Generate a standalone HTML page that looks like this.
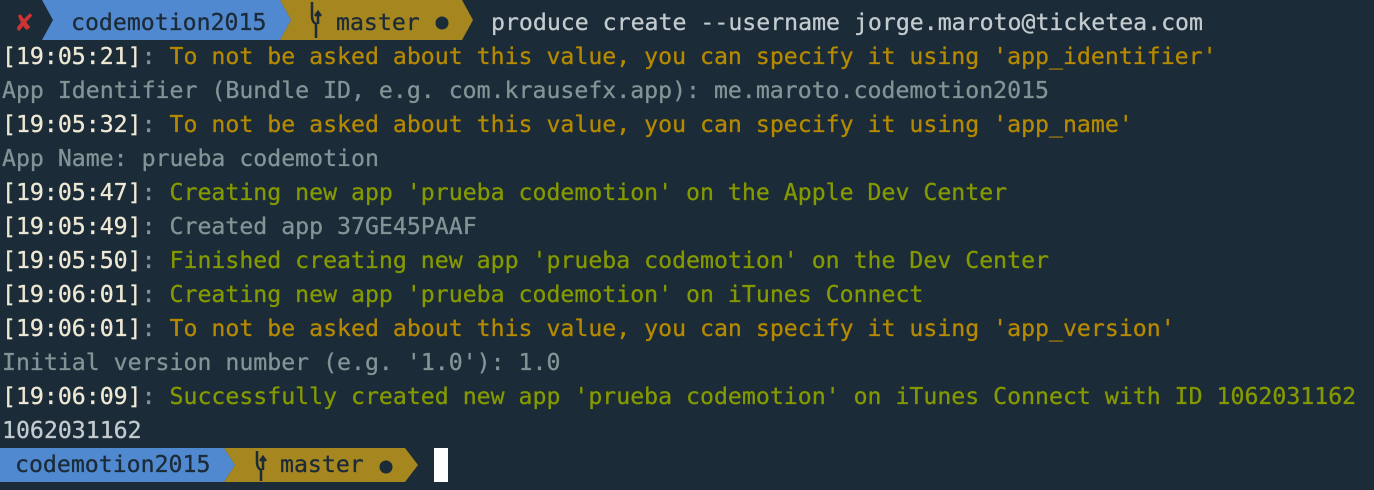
<!DOCTYPE html><html><head><style>
body{margin:0;width:1374px;height:490px;background:#1b2b37;overflow:hidden;position:relative;font-family:"DejaVu Sans Mono","Liberation Mono",monospace;font-size:23.2px;}
.l{position:absolute;left:2px;white-space:pre;height:34px;line-height:34px;color:#839496;-webkit-text-stroke:0.3px currentColor}
.t{color:#eee8d5}.y{color:#b58900}.g{color:#859900}
.a{position:absolute;white-space:pre;line-height:34px;color:#1b2b37;-webkit-text-stroke:0.3px currentColor}
</style></head><body>
<svg width="1374" height="490" style="position:absolute;left:0;top:0">
<polygon points="42,0 280,0 291,20 280,40 42,40 53,20" fill="#5189d0"/>
<polygon points="280,0 462,0 473,20 462,40 280,40 291,20" fill="#a5861f"/>
<polygon points="0,448 224,448 235,465 224,482 0,482" fill="#5189d0"/>
<polygon points="224,448 405,448 418,465 405,482 224,482 235,465" fill="#a5861f"/>
<rect x="434" y="448" width="14" height="34" fill="#fff"/>
<circle cx="442" cy="23" r="6.5" fill="#1b2b37"/>
<circle cx="386" cy="467" r="6.5" fill="#1b2b37"/>
<g stroke="#1b2b37" stroke-width="2.5" fill="none"><path d="M312,2V16M312,16Q312,22 316,24V38M318,24L318,14M315,16L318,12L321,16"/><path d="M257,451V462M257,462Q257,468 261,470V481M263,470L263,459M260,461L263,457L266,461"/></g>
<text x="14" y="31" fill="#cc3333" font-size="24" font-weight="bold" font-family="DejaVu Sans">✘</text>
</svg>
<div class="a" style="left:71px;top:6px">codemotion2015</div>
<div class="a" style="left:336px;top:6px">master</div>
<div class="a" style="left:491px;top:6px;color:#c3cbcf">produce create --username jorge.maroto@ticketea.com</div>
<div class="l" style="top:40px"><span class="t">[19:05:21]</span>: <span class="y">To not be asked about this value, you can specify it using 'app_identifier'</span></div>
<div class="l" style="top:74px">App Identifier (Bundle ID, e.g. com.krausefx.app): me.maroto.codemotion2015</div>
<div class="l" style="top:108px"><span class="t">[19:05:32]</span>: <span class="y">To not be asked about this value, you can specify it using 'app_name'</span></div>
<div class="l" style="top:142px">App Name: prueba codemotion</div>
<div class="l" style="top:176px"><span class="t">[19:05:47]</span>: <span class="g">Creating new app 'prueba codemotion' on the Apple Dev Center</span></div>
<div class="l" style="top:210px"><span class="t">[19:05:49]</span>: Created app 37GE45PAAF</div>
<div class="l" style="top:244px"><span class="t">[19:05:50]</span>: <span class="g">Finished creating new app 'prueba codemotion' on the Dev Center</span></div>
<div class="l" style="top:278px"><span class="t">[19:06:01]</span>: <span class="g">Creating new app 'prueba codemotion' on iTunes Connect</span></div>
<div class="l" style="top:312px"><span class="t">[19:06:01]</span>: <span class="y">To not be asked about this value, you can specify it using 'app_version'</span></div>
<div class="l" style="top:346px">Initial version number (e.g. '1.0'): 1.0</div>
<div class="l" style="top:380px"><span class="t">[19:06:09]</span>: <span class="g">Successfully created new app 'prueba codemotion' on iTunes Connect with ID 1062031162</span></div>
<div class="l" style="top:414px;color:#c3cbcf">1062031162</div>
<div class="a" style="left:15px;top:448px">codemotion2015</div>
<div class="a" style="left:280px;top:448px">master</div>
</body></html>
